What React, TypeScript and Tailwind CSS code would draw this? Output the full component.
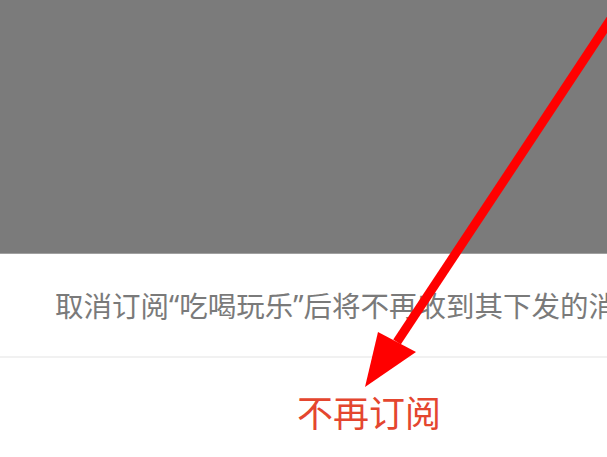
export default function App() {
  return (
    <div
      className="relative w-[607px] h-[457px] overflow-hidden bg-white"
      style={{ fontFamily: '"Noto Sans CJK SC", "Noto Sans", sans-serif' }}
    >
      <div className="h-[254px] bg-[#7b7b7b] border-b border-[#a0a0a0]" />

      <div className="h-[102px] flex items-center pl-[55px] whitespace-nowrap text-[28.5px] text-[#7a7a7a]">
        取消订阅
        <span className="font-['Noto_Sans',sans-serif]">“</span>
        吃喝玩乐
        <span className="font-['Noto_Sans',sans-serif]">”</span>
        后将不再收到其下发的消息
      </div>

      <div className="h-[2px] bg-[#f1f1f1]" />

      <div className="h-[106px] flex items-center pl-[297px] whitespace-nowrap text-[36px] text-[#e4462f]">
        不再订阅
      </div>

      {/* annotation arrow */}
      <svg
        className="absolute inset-0 pointer-events-none"
        width="607"
        height="457"
        viewBox="0 0 607 457"
      >
        <line x1="630" y1="-10" x2="397" y2="342" stroke="#ff0000" strokeWidth="9" />
        <polygon points="365,387 378,332 416,352" fill="#ff0000" />
      </svg>
    </div>
  );
}
